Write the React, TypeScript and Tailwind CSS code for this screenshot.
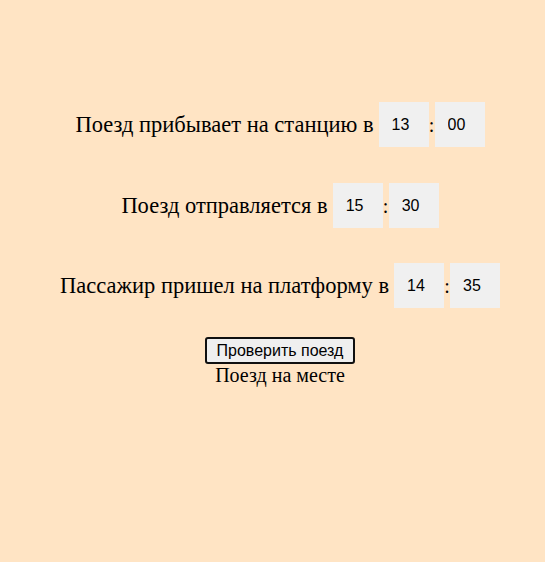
import { useState } from "react"

function TimeRow({ label, h, m }: { label: string; h: string; m: string }) {
  return (
    <div className="flex items-center justify-center h-[45px]">
      <span className="text-[22.5px] mr-[5px]">{label}</span>
      <input
        defaultValue={h}
        className="w-[50px] h-[45px] bg-[#f0f0f0] pl-[13px] outline-none text-[16px] text-black font-['Liberation_Sans',Arial,sans-serif]"
      />
      <span className="w-[6px] flex justify-center text-[20px]">:</span>
      <input
        defaultValue={m}
        className="w-[50px] h-[45px] bg-[#f0f0f0] pl-[13px] outline-none text-[16px] text-black font-['Liberation_Sans',Arial,sans-serif]"
      />
    </div>
  )
}

export default function App() {
  const [result] = useState("Поезд на месте")

  return (
    <div className="min-h-[562px] bg-[#ffe4c4] pl-[15px] pt-[102px] text-black font-['Liberation_Serif','Times_New_Roman',serif]">
      <div className="flex flex-col items-center">
        <TimeRow label="Поезд прибывает на станцию в" h="13" m="00" />
        <div className="mt-[36px]">
          <TimeRow label="Поезд отправляется в" h="15" m="30" />
        </div>
        <div className="mt-[35px]">
          <TimeRow label="Пассажир пришел на платформу в" h="14" m="35" />
        </div>
        <button className="mt-[29px] h-[27px] px-[10px] bg-[#efefef] border-2 border-[#101010] rounded-[3px] text-[16px] leading-none font-['Liberation_Sans',Arial,sans-serif]">
          Проверить поезд
        </button>
        <div className="text-[20px] leading-[22px]">{result}</div>
      </div>
    </div>
  )
}
